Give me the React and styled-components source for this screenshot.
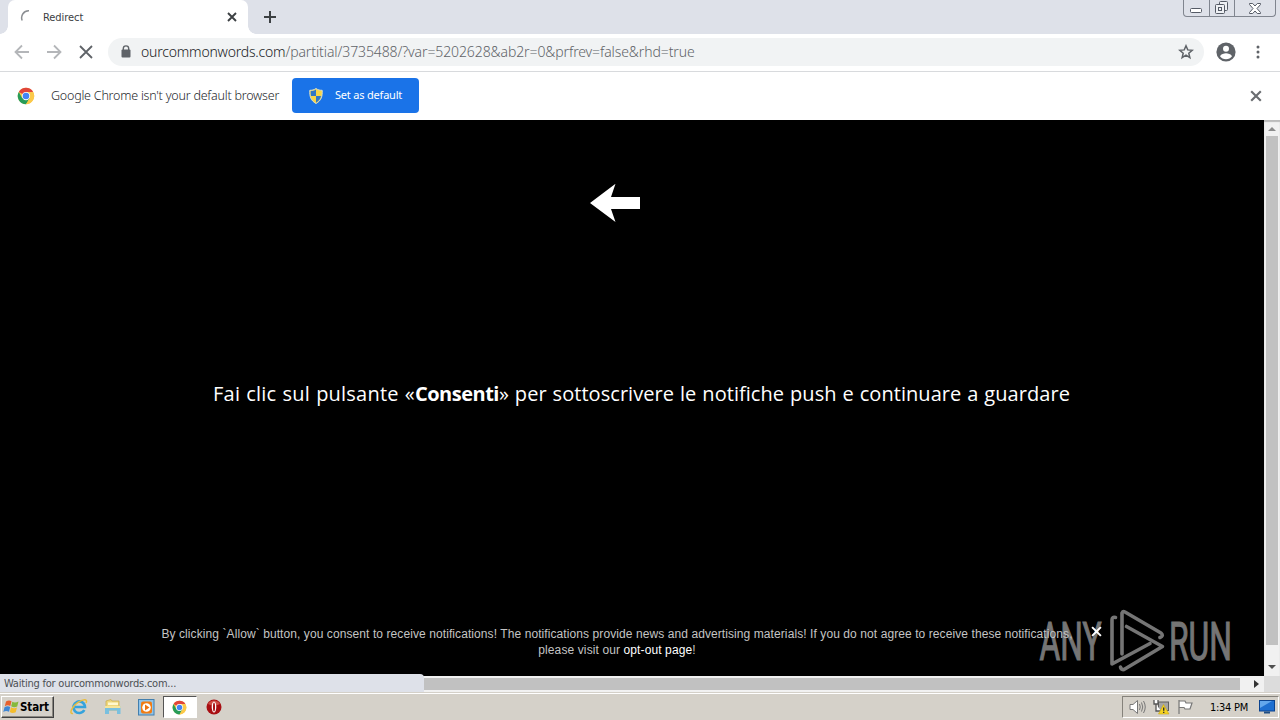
import styled, { createGlobalStyle } from "styled-components";

const App = () => {
    return (
        <>
            <GlobalStyle />
            <Desktop>
                <TabStrip>
                    <StripEdge />
                    <Tab>
                        <Spinner viewBox="0 0 16 16">
                            <path d="M2.2 11.5A7 7 0 0 1 9 1.8" />
                        </Spinner>
                        <TabTitle>Redirect</TabTitle>
                        <Cross size={10} color="#3c4043" weight={1.9} />
                    </Tab>
                    <NewTab>
                        <Plus viewBox="0 0 12 12">
                            <path d="M6 0v12M0 6h12" />
                        </Plus>
                    </NewTab>
                    <WindowButtons />
                </TabStrip>
                <Toolbar>
                    <NavIcon viewBox="0 0 16 16" color="#b4b6b9">
                        <path d="M15 8H2M8 1.5L1.5 8L8 14.5" />
                    </NavIcon>
                    <NavIcon viewBox="0 0 16 16" color="#b4b6b9">
                        <path d="M1 8h13M8 1.5L14.5 8L8 14.5" />
                    </NavIcon>
                    <NavIcon viewBox="0 0 16 16" color="#5f6368">
                        <path d="M2 2l12 12M14 2L2 14" />
                    </NavIcon>
                    <AddressBar>
                        <Lock viewBox="0 0 10 13">
                            <path
                                d="M2.3 5V3.6a2.7 2.7 0 0 1 5.4 0V5"
                                fill="none"
                                stroke="#5f6368"
                                strokeWidth="1.4"
                            />
                            <rect
                                x="0.5"
                                y="4.5"
                                width="9"
                                height="8"
                                rx="1"
                                fill="#5f6368"
                            />
                        </Lock>
                        <Host>ourcommonwords.com</Host>
                        <Path>
                            /partitial/3735488/?var=5202628&amp;ab2r=0&amp;prfrev=false&amp;rhd=true
                        </Path>
                        <Star viewBox="0 0 16 16">
                            <path d="M8 1.8l1.75 4.1 4.45.4-3.4 2.9 1.05 4.35L8 11.2l-3.85 2.35L5.2 9.2 1.8 6.3l4.45-.4z" />
                        </Star>
                    </AddressBar>
                    <Avatar viewBox="0 0 20 20">
                        <circle cx="10" cy="10" r="9.6" fill="#5f6368" />
                        <circle cx="10" cy="6.8" r="3" fill="#fff" />
                        <path
                            d="M4 14.2c1-2.2 4-2.9 6-2.9s5 .7 6 2.9c-1.3 1.8-3.5 3-6 3s-4.7-1.2-6-3z"
                            fill="#fff"
                        />
                    </Avatar>
                    <Dots viewBox="0 0 4 14">
                        <circle cx="2" cy="2" r="1.5" />
                        <circle cx="2" cy="7" r="1.5" />
                        <circle cx="2" cy="12" r="1.5" />
                    </Dots>
                </Toolbar>
                <InfoBar>
                    <ChromeLogo size={18} />
                    <InfoText>Google Chrome isn't your default browser</InfoText>
                    <DefaultButton>
                        <Shield />
                        <span>Set as default</span>
                    </DefaultButton>
                    <InfoClose>
                        <Cross size={12} color="#6a6d71" weight={1.8} />
                    </InfoClose>
                </InfoBar>
                <Viewport>
                    <Page>
                        <Watermark />
                        <PageArrow viewBox="0 0 50 40">
                            <path d="M0 20L25.5 .8L21 14H50V26H21L25.5 39Z" />
                        </PageArrow>
                        <Headline>
                            <span>Fai clic sul pulsante «</span>
                            <b>Consenti</b>» per sottoscrivere le notifiche push
                            e continuare a guardare
                        </Headline>
                        <Notice>
                            <NoticeLine spacing={0.085}>
                                By clicking `Allow` button, you consent to
                                receive notifications! The notifications provide
                                news and advertising materials! If you do not
                                agree to receive these notifications,
                            </NoticeLine>
                            <NoticeLine spacing={0.11}>
                                please visit our <a>opt-out page</a>!
                            </NoticeLine>
                            <NoticeClose>
                                <Cross size={11} color="#fff" weight={1.8} />
                            </NoticeClose>
                        </Notice>
                    </Page>
                    <VerticalScroll>
                        <Triangle viewBox="0 0 8 4" color="#8b8b8b">
                            <path d="M0 4L4 0L8 4Z" />
                        </Triangle>
                        <VerticalThumb />
                        <Triangle viewBox="0 0 8 4" color="#505050">
                            <path d="M0 0L4 4L8 0Z" />
                        </Triangle>
                    </VerticalScroll>
                </Viewport>
                <BottomRow>
                    <Status>Waiting for ourcommonwords.com...</Status>
                    <HorizontalThumb />
                    <ScrollRight>
                        <svg width="5" height="8" viewBox="0 0 5 8">
                            <path d="M0 0L5 4L0 8Z" fill="#333" />
                        </svg>
                    </ScrollRight>
                    <Corner />
                </BottomRow>
                <Taskbar />
            </Desktop>
        </>
    );
};

const Cross = ({ size, color, weight }) => (
    <svg width={size} height={size} viewBox="0 0 10 10">
        <path
            d="M1 1l8 8M9 1L1 9"
            stroke={color}
            strokeWidth={weight}
            fill="none"
        />
    </svg>
);

const ChromeLogo = ({ size }) => (
    <svg width={size} height={size} viewBox="0 0 48 48">
        <circle cx="24" cy="24" r="22" fill="#fbc94a" />
        <path d="M24 24L4.9 13A22 22 0 0 1 43 13H24Z" fill="#e0453a" />
        <path
            d="M4.9 13A22 22 0 0 0 24 46L34 29.7L24 24L14 29.7Z"
            fill="#279c58"
        />
        <path d="M24 13H43A22 22 0 0 1 24 46L34 29Z" fill="#fbc94a" />
        <circle cx="24" cy="24" r="11" fill="#fff" />
        <circle cx="24" cy="24" r="8.8" fill="#4285f4" />
    </svg>
);

const Shield = () => (
    <svg width="14" height="16" viewBox="0 0 14 16">
        <path
            d="M7 .5C5 2 3 2.3.8 2.3C.5 8 1.5 12.5 7 15.5C12.5 12.5 13.5 8 13.2 2.3C11 2.3 9 2 7 .5Z"
            fill="#f8d546"
            stroke="#d9dfc9"
        />
        <path d="M7 1.5C5.5 2.6 3.5 3 1.7 3C1.6 5 1.7 6.5 2 8H7Z" fill="#3277c4" />
        <path d="M7 8H12C11.4 11 10 13 7 14.7Z" fill="#3277c4" />
    </svg>
);

const WindowButtons = () => (
    <WindowControls>
        <WindowButton width={25}>
            <svg width="13" height="6" viewBox="0 0 13 6">
                <rect x=".5" y=".5" width="11" height="4" rx="1" fill="#fff" stroke="#555b66" />
            </svg>
        </WindowButton>
        <WindowButton width={25}>
            <svg width="14" height="14" viewBox="0 0 14 14" fill="#eef0f4" stroke="#555b66">
                <rect x="4.5" y=".5" width="8" height="9" rx="1" />
                <rect x=".5" y="3.5" width="9" height="9" rx="1" />
                <rect x="3.5" y="6.5" width="3" height="3" />
            </svg>
        </WindowButton>
        <WindowButton width={41}>
            <svg width="12" height="11" viewBox="0 0 12 11" fill="#fff" stroke="#555b66">
                <path d="M.5.5H3.7L6 3L8.3.5H11.5V1.5L8 5.5L11.5 9.5V10.5H8.3L6 8L3.7 10.5H.5V9.5L4 5.5L.5 1.5Z" />
            </svg>
        </WindowButton>
    </WindowControls>
);

const Watermark = () => (
    <WatermarkSvg viewBox="0 0 204 76">
        <g
            fill="#828282"
            stroke="#828282"
            strokeWidth="1.2"
            fontFamily="Roboto, sans-serif"
            fontSize="53"
        >
            <text x="3.5" y="58" textLength="62" lengthAdjust="spacingAndGlyphs">
                ANY
            </text>
            <text x="133" y="58" textLength="63" lengthAdjust="spacingAndGlyphs">
                RUN
            </text>
        </g>
        <g
            fill="none"
            stroke="#828282"
            strokeWidth="3.6"
            strokeLinecap="round"
            strokeLinejoin="round"
        >
            <path d="M79.5 15.5Q76 14.5 76 18V62L114 41.5" />
            <path d="M86 52V11Q87 9 89 10L125 31Q128 34 124 35.5" />
            <path d="M90.5 24.5L126.5 44.5L88 67.5Q85 68 84.5 65" />
        </g>
    </WatermarkSvg>
);

const Taskbar = () => (
    <TaskbarRow>
        <StartButton>
            <svg width="17" height="16" viewBox="0 0 17 16">
                <path d="M3 2.5Q6 .5 8.5 2.3L7.3 7Q4.5 5.5 1.8 7.3Z" fill="#e8602c" />
                <path d="M9.3 2.8Q12 4.5 15.5 2.5L14.2 7.5Q11 9 8.2 7.3Z" fill="#85b93c" />
                <path d="M1.5 8.2Q4.5 6.5 7.2 8L6 12.8Q3 11 .3 13Z" fill="#3f86d4" />
                <path d="M8 8.3Q11 10 14 8.5L12.7 13.3Q9.5 15 6.8 13.1Z" fill="#f4bd2d" />
            </svg>
            Start
        </StartButton>
        <TaskItem>
            <svg width="18" height="18" viewBox="0 0 18 18">
                <path
                    d="M14.3 12A5.8 5.8 0 1 1 15 9H5"
                    fill="none"
                    stroke="#35a3dc"
                    strokeWidth="2.6"
                />
                <path
                    d="M3 15.5C-1.5 16.5 2 8 8 4.3S18 1 16 5"
                    fill="none"
                    stroke="#e9bd3e"
                    strokeWidth="1.5"
                />
            </svg>
        </TaskItem>
        <TaskItem>
            <svg width="18" height="18" viewBox="0 0 18 18">
                <path d="M2 3L7 1.5L8 3H15V12H2Z" fill="#eed77d" stroke="#c9ab4c" strokeWidth=".7" />
                <path d="M4 4.5H14V7H4Z" fill="#fff8cf" />
                <path d="M1 8H16.5V16H13V12.5H5V16H1Z" fill="#79c0df" />
                <path d="M1 8H16.5V10H1Z" fill="#f6e59b" />
            </svg>
        </TaskItem>
        <TaskItem>
            <svg width="17" height="17" viewBox="0 0 17 17">
                <rect x=".5" y=".5" width="15.5" height="15.5" fill="#8fc4ea" stroke="#437fae" />
                <rect x="3" y="2.5" width="11" height="12" rx="2" fill="#f17c13" />
                <circle cx="8.5" cy="8.5" r="4.3" fill="#fff" />
                <path d="M7 5.5L11.5 8.5L7 11.5Z" fill="#ec7412" />
            </svg>
        </TaskItem>
        <TaskItem active>
            <ChromeLogo size={15} />
        </TaskItem>
        <TaskItem>
            <svg width="16" height="16" viewBox="0 0 16 16">
                <circle cx="8" cy="8" r="7.5" fill="#a80e12" />
                <path d="M2 5A7 7 0 0 1 14 5Q8 8 2 5Z" fill="#cf4d45" />
                <ellipse cx="8" cy="8" rx="2.3" ry="5.6" fill="#fff" />
                <ellipse cx="8" cy="8" rx="1" ry="4.6" fill="#a80e12" />
            </svg>
        </TaskItem>
        <Tray>
            <svg width="17" height="16" viewBox="0 0 17 16">
                <path d="M1 5.5H4L8.5 1.5V14.5L4 10.5H1Z" fill="#fff" stroke="#777" />
                <path
                    d="M10.5 5Q12 8 10.5 11M12.5 3.5Q15 8 12.5 12.5M14.5 2Q18 8 14.5 14"
                    fill="none"
                    stroke="#777"
                />
            </svg>
            <svg width="17" height="16" viewBox="0 0 17 16">
                <rect x="5.5" y="3" width="10" height="8.5" fill="#a5a5a5" stroke="#5e5e5e" />
                <path d="M1 1V5H5V1M3 5V12H8" fill="#fff" stroke="#555" strokeWidth="1.3" />
                <path d="M10.5 5.5L16 15H5.5Z" fill="#f5d321" stroke="#c9a712" strokeWidth=".6" />
                <path d="M10.7 8.5V11.8M10.7 12.7V14" stroke="#333" strokeWidth="1.4" />
            </svg>
            <svg width="17" height="16" viewBox="0 0 17 16">
                <path
                    d="M2 1V15M2.5 2H8L9 4H15L13 10H8L7 8.5H2.5"
                    fill="#fff"
                    stroke="#777"
                    strokeWidth="1.2"
                />
            </svg>
            <Clock>1:34 PM</Clock>
            <svg width="16" height="14" viewBox="0 0 16 14">
                <rect x=".5" y=".5" width="15" height="10.5" fill="#1e6fd0" stroke="#0b438f" />
                <path d="M1 1H13L1 8Z" fill="#63a7ec" />
                <path d="M5 12.5H11" stroke="#1e4d84" strokeWidth="2" />
            </svg>
        </Tray>
    </TaskbarRow>
);

const GlobalStyle = createGlobalStyle`
    * {
        box-sizing: border-box;
    }
    body {
        margin: 0;
        overflow: hidden;
        background: #000;
        font-family: "Noto Sans", sans-serif;
    }
    svg {
        display: block;
        flex: none;
    }
`;

const Desktop = styled.div`
    width: 1280px;
    height: 720px;
    display: flex;
    flex-direction: column;
`;

const TabStrip = styled.div`
    height: 34px;
    display: flex;
    background: #dee1e9;
`;

const StripEdge = styled.div`
    width: 8px;
    background: radial-gradient(circle at 0 0, transparent 7.5px, #fff 8px)
        bottom right / 8px 8px no-repeat;
`;

const Tab = styled.div`
    width: 240px;
    display: flex;
    align-items: center;
    padding: 0 11px 0 12px;
    border-radius: 7px 7px 0 0;
    background: #fff;
`;

const Spinner = styled.svg`
    width: 16px;
    height: 16px;
    fill: none;
    stroke: #8b8e92;
    stroke-width: 1.5;
`;

const TabTitle = styled.span`
    flex: 1;
    margin-left: 7px;
    font-family: "DejaVu Sans Condensed", "DejaVu Sans", sans-serif;
    font-stretch: condensed;
    font-size: 11px;
    letter-spacing: -0.05px;
    color: #3c4043;
`;

const NewTab = styled.div`
    flex: 1;
    display: flex;
    align-items: center;
    padding-left: 16px;
    background: radial-gradient(circle at 100% 0, transparent 7.5px, #fff 8px)
        bottom left / 8px 8px no-repeat;
`;

const Plus = styled.svg`
    width: 12px;
    height: 12px;
    stroke: #3c4043;
    stroke-width: 2;
`;

const WindowControls = styled.div`
    height: 17px;
    margin-right: 4px;
    display: flex;
    border: 1px solid #80858f;
    border-top: none;
    border-radius: 0 0 4px 4px;
`;

const WindowButton = styled.div`
    width: ${({ width }) => width}px;
    display: flex;
    align-items: center;
    justify-content: center;
    & + & {
        border-left: 1px solid #80858f;
    }
    &:first-child {
        padding-top: 5px;
    }
`;

const Toolbar = styled.div`
    height: 38px;
    display: flex;
    align-items: center;
    gap: 16px;
    padding: 0 20px 2px 14px;
    border-bottom: 1px solid #d8dadd;
    background: #fff;
`;

const NavIcon = styled.svg`
    width: 16px;
    height: 16px;
    fill: none;
    stroke: ${({ color }) => color};
    stroke-width: 1.8;
`;

const AddressBar = styled.div`
    width: 1096px;
    height: 28px;
    margin-left: -2px;
    display: flex;
    align-items: center;
    padding: 0 10px 0 13px;
    border-radius: 14px;
    background: #f1f3f4;
    font-family: "Noto Sans", sans-serif;
    font-size: 14px;
    font-weight: 300;
    white-space: nowrap;
`;

const Lock = styled.svg`
    width: 10px;
    height: 13px;
    margin-right: 10px;
`;

const Host = styled.span`
    color: #202124;
    letter-spacing: -0.2px;
`;

const Path = styled.span`
    flex: 1;
    color: #5f6368;
    letter-spacing: -0.1px;
`;

const Star = styled.svg`
    width: 16px;
    height: 16px;
    fill: none;
    stroke: #5f6368;
    stroke-width: 1.5;
`;

const Avatar = styled.svg`
    width: 20px;
    height: 20px;
    margin-left: -4px;
`;

const Dots = styled.svg`
    width: 4px;
    height: 14px;
    margin-left: 4px;
    fill: #5f6368;
`;

const InfoBar = styled.div`
    height: 48px;
    display: flex;
    align-items: center;
    padding: 0 18px 1px 17px;
    background: #fff;
`;

const InfoText = styled.span`
    width: 241px;
    margin-left: 16px;
    font-size: 12.5px;
    font-weight: 300;
    letter-spacing: -0.22px;
    white-space: nowrap;
    color: #26282b;
`;

const DefaultButton = styled.div`
    width: 127px;
    height: 35px;
    display: flex;
    align-items: center;
    gap: 12px;
    padding-left: 17px;
    border-radius: 4px;
    background: #1a73e8;
    color: #fff;
    font-size: 11px;
    line-height: 14px;
    letter-spacing: -0.2px;
    white-space: nowrap;
    span {
        padding-bottom: 1px;
    }
`;

const InfoClose = styled.div`
    margin-left: auto;
`;

const Viewport = styled.div`
    height: 556px;
    display: flex;
`;

const Page = styled.div`
    position: relative;
    width: 1264px;
    display: flex;
    flex-direction: column;
    background: #000;
`;

const PageArrow = styled.svg`
    width: 50px;
    height: 40px;
    margin: 63px 0 0 590px;
    fill: #fff;
`;

const Headline = styled.p`
    height: 30px;
    margin: 156px 0 0 213px;
    color: #fff;
    font-family: "Open Sans", sans-serif;
    font-size: 20px;
    line-height: 30px;
    letter-spacing: 0.05px;
    word-spacing: 0.7px;
    white-space: nowrap;
    span {
        letter-spacing: 0.22px;
    }
    b {
        letter-spacing: -0.5px;
    }
`;

const Notice = styled.div`
    position: relative;
    margin: 217px 30px 0 0;
    display: flex;
    flex-direction: column;
    align-items: center;
`;

const NoticeLine = styled.span`
    font-family: "Liberation Sans", Arial, sans-serif;
    font-size: 12px;
    line-height: 16px;
    letter-spacing: ${({ spacing }) => spacing}px;
    white-space: nowrap;
    color: #c4c4c4;
    a {
        color: #fff;
    }
`;

const NoticeClose = styled.div`
    position: absolute;
    top: 0;
    left: 1091px;
`;

const WatermarkSvg = styled.svg`
    position: absolute;
    width: 204px;
    height: 76px;
    right: 24px;
    bottom: -2px;
    overflow: visible;
    opacity: 0.9;
`;

const VerticalScroll = styled.div`
    width: 16px;
    display: flex;
    flex-direction: column;
    align-items: center;
    justify-content: space-between;
    padding: 7px 0;
    background: #f1f1f1;
    box-shadow: inset 0 2px 1px #bbb;
`;

const Triangle = styled.svg`
    width: 8px;
    height: 4px;
    fill: ${({ color }) => color};
`;

const VerticalThumb = styled.div`
    width: 12px;
    height: 509px;
    margin-bottom: 16px;
    background: #c1c1c1;
`;

const BottomRow = styled.div`
    height: 16px;
    display: flex;
    align-items: center;
    background: #f1f1f1;
`;

const Status = styled.div`
    width: 424px;
    height: 18px;
    margin-top: -2px;
    padding-left: 4px;
    border-top-right-radius: 4px;
    background: #dee1e9;
    font-family: "DejaVu Sans Condensed", "DejaVu Sans", sans-serif;
    font-stretch: condensed;
    font-size: 11px;
    line-height: 19px;
    letter-spacing: -0.22px;
    color: #4c4f54;
    z-index: 1;
`;

const HorizontalThumb = styled.div`
    width: 816px;
    height: 12px;
    background: #c1c1c1;
`;

const ScrollRight = styled.div`
    width: 24px;
    display: flex;
    padding-left: 14px;
`;

const Corner = styled.div`
    width: 16px;
    height: 16px;
    background: #dcdcdc;
`;

const TaskbarRow = styled.div`
    height: 28px;
    display: flex;
    align-items: center;
    padding: 1px 1px 0;
    border-top: 1px solid #d4d0c8;
    box-shadow: inset 0 1px 0 #fff;
    background: #d5d1c9;
`;

const StartButton = styled.div`
    width: 53px;
    height: 22px;
    margin-right: 8px;
    display: flex;
    align-items: center;
    padding-left: 1px;
    border: 1px solid;
    border-color: #fff #404040 #404040 #fff;
    box-shadow: inset -1px -1px 0 #8a8780;
    font-family: "DejaVu Sans Condensed", "DejaVu Sans", sans-serif;
    font-stretch: condensed;
    font-size: 11.5px;
    font-weight: bold;
    letter-spacing: -0.1px;
    color: #000;
`;

const TaskItem = styled.div`
    width: 33.7px;
    height: 22px;
    display: flex;
    align-items: center;
    justify-content: center;
    border: 1px solid transparent;
    ${({ active }) =>
        active &&
        `
        background: #fff;
        border-color: #555 #fff #fff #555;
    `}
`;

const Tray = styled.div`
    width: 157px;
    height: 22px;
    margin-left: auto;
    display: flex;
    align-items: center;
    gap: 7px;
    padding: 0 3px 0 6px;
    border: 1px solid;
    border-color: #85827b #fff #fff #85827b;
`;

const Clock = styled.span`
    flex: 1;
    padding-right: 4px;
    text-align: right;
    font-family: "DejaVu Sans Condensed", "DejaVu Sans", sans-serif;
    font-stretch: condensed;
    font-size: 11px;
    letter-spacing: -0.25px;
    white-space: nowrap;
    color: #000;
`;

export default App;
